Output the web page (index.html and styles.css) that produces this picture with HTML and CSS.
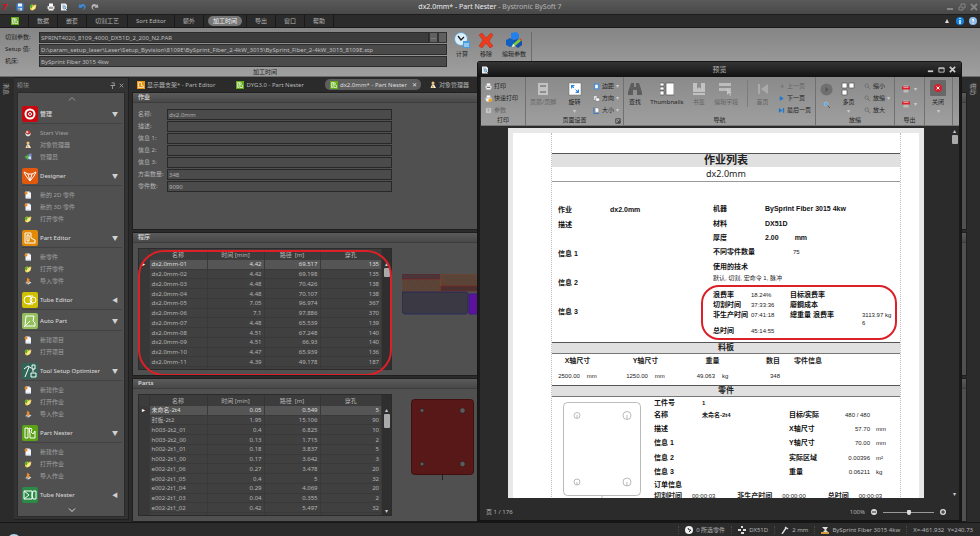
FILE: index.html
```html
<!DOCTYPE html>
<html lang="zh-CN">
<head>
    <meta charset="UTF-8">
    <meta name="viewport" content="width=device-width, initial-scale=1.0">
    <title>dx2.0mm* - Part Nester - Bystronic BySoft 7</title>
    <link rel="stylesheet" href="styles.css">
</head>
<body>
    <svg class="sprite" aria-hidden="true">
        <symbol id="new" viewBox="0 0 16 16"><path d="M3 1h8l3 3v11H3z" fill="#f4f6fa"/><path d="M11 1v3h3z" fill="#9db4d8"/><circle cx="4" cy="4" r="3" fill="#f08a24"/><path d="M5 13h8v2H5z" fill="#c5d3ea"/></symbol>
        <symbol id="open" viewBox="0 0 16 16"><path d="M2 5l5-2 2 2 4-3v9l-6 4-5-2z" fill="#e8c63a"/><path d="M5 8l10-4-3 8-7 3z" fill="#fbe98a"/><path d="M1 7l4-5 2 5-2 4z" fill="#4fae2c"/></symbol>
        <symbol id="import" viewBox="0 0 16 16"><path d="M3 10l6-2 6 3-6 4z" fill="#cfd3d8"/><path d="M3 11v2l6 3v-2z" fill="#8d9298"/><path d="M5 7l2-6 5 5-2 1 1 4-4 1-1-5z" fill="#f08a24"/></symbol>
        <symbol id="start" viewBox="0 0 16 16"><path d="M2 8l6 3 6-3-2 5-4 2-4-2z" fill="#e6e6e6"/><path d="M2 7l6-5 6 5-6 4z" fill="#d6352b"/><path d="M6 3l3 5-5-1z" fill="#fff"/></symbol>
        <symbol id="user" viewBox="0 0 16 16"><circle cx="8" cy="4" r="3" fill="#f1c27a"/><path d="M3 14l3-7h4l4 7z" fill="#f5f1e6"/><path d="M7 8l3 5H5z" fill="#d89128"/></symbol>
        <symbol id="admin" viewBox="0 0 16 16"><path d="M9 2l6-1v13l-6-1z" fill="#7e8fd0"/><path d="M1 8l7-5v3h3v4H8v4z" fill="#53b148"/><path d="M9 7h5v5H9z" fill="#d8dff5"/></symbol>
        <symbol id="save" viewBox="0 0 16 16"><path d="M1 1h14v14H1z" fill="#3f84d6"/><path d="M4 1h8v6H4z" fill="#eef5fd"/><path d="M4 10h8v5H4z" fill="#c8d6e6"/><path d="M5 11h2v4H5z" fill="#345"/></symbol>
        <symbol id="print" viewBox="0 0 16 16"><path d="M4 1h8v5H4z" fill="#fff"/><path d="M1 6h14v6H1z" fill="#dadada"/><path d="M3 9h10v6H3z" fill="#f5f5f5"/><path d="M4 9h8v2H4z" fill="#555"/></symbol>
        <symbol id="preview" viewBox="0 0 16 16"><path d="M2 1h9l3 3v11H2z" fill="#eef2f6"/><path d="M4 4h5M4 6h6" stroke="#8aa" /><circle cx="9" cy="9" r="3" fill="#9fd0f0" stroke="#47708c"/><path d="M11 11l3 3" stroke="#47708c" stroke-width="2"/></symbol>
        <symbol id="undo" viewBox="0 0 16 16"><path d="M1 9l2-7 2 2c5-4 11-1 10 5-1 3-3 5-6 5 3-2 4-4 3-6-1-2-3-2-5 0l2 2z" fill="#3d8be0"/></symbol>
        <symbol id="redo" viewBox="0 0 16 16"><path d="M15 9l-2-7-2 2C6 0 0 3 1 9c1 3 3 5 6 5-3-2-4-4-3-6 1-2 3-2 5 0l-2 2z" fill="#b4b4b4"/></symbol>
        <symbol id="nester" viewBox="0 0 16 16"><path d="M0 0h16v16H0z" fill="#63ad18"/><path d="M3 3h3v10H3zM7 3l4 1-2 3 4 2v4H8V9z" fill="none" stroke="#fff" stroke-width="1.3"/></symbol>
        <symbol id="editor" viewBox="0 0 16 16"><path d="M0 0h16v16H0z" fill="#ea9711"/><path d="M3 3h6v6l4 1v3H3z" fill="none" stroke="#fff" stroke-width="1.3"/></symbol>
        <symbol id="lens" viewBox="0 0 16 16"><circle cx="6" cy="6" r="4" fill="none" stroke="#666" stroke-width="1.5"/><path d="M9 9l5 5" stroke="#666" stroke-width="2"/></symbol>
        <symbol id="pdf" viewBox="0 0 16 16"><path d="M3 1h10v14H3z" fill="#bbb"/><path d="M0 3h16v6H0z" fill="#d8222b"/><path d="M3 5h10v1H3z" fill="#fff"/></symbol>
    </svg>

    <div class="app">
        <header class="titlebar">
            <div class="quick">
                <b class="seven">7</b>
                <button aria-label="保存"><svg><use href="#save"/></svg></button>
                <button aria-label="打开"><svg><use href="#open"/></svg></button>
                <i></i>
                <button aria-label="打印"><svg><use href="#print"/></svg></button>
                <button aria-label="预览"><svg><use href="#preview"/></svg></button>
                <i></i>
                <button aria-label="撤消"><svg><use href="#undo"/></svg></button>
                <button aria-label="重做"><svg><use href="#redo"/></svg></button>
            </div>
            <h1>dx2.0mm* - Part Nester <span>- Bystronic BySoft 7</span></h1>
            <div class="winbtns">
                <button aria-label="最小化"><svg viewBox="0 0 8 8"><path d="M1 6h6" stroke-width="2"/></svg></button>
                <button aria-label="还原"><svg viewBox="0 0 8 8"><path d="M1 4h4v3H1zM3 3V1h4v4H6"/></svg></button>
                <button aria-label="退出"><svg viewBox="0 0 8 8"><path d="M1 1l6 6M7 1L1 7" stroke-width="2"/></svg></button>
            </div>
        </header>

        <nav class="menu">
            <button class="logo" aria-label="Part Nester"><svg><use href="#nester"/></svg></button>
            <button>数据</button>
            <button>嵌套</button>
            <button>切割工艺</button>
            <button>Sort Editor</button>
            <button>额外</button>
            <button class="active"><span>加工时间</span></button>
            <button>导出</button>
            <button>窗口</button>
            <button>帮助</button>
            <div class="menu-right">
                <svg viewBox="0 0 8 8"><path d="M4 2l2 4H2z" fill="#ddd"/></svg>
                <svg viewBox="0 0 8 8"><circle cx="4" cy="4" r="4" fill="#1583e0"/><path d="M4 1v1M4 3v4" stroke="#fff" stroke-width="1.4"/></svg>
                <svg viewBox="0 0 8 8"><circle cx="4" cy="4" r="4" fill="#8fbce8"/><path d="M3 3q1-2 2 0L4 4v1M4 6v1" stroke="#fff" fill="none"/></svg>
            </div>
        </nav>

        <section class="ribbon">
            <div class="ribbon-group">
                <div class="params">
                    <label for="par">切割参数:</label>
                    <div class="field"><input id="par" readonly value="SPRINT4020_8109_4000_DX51D_2_200_N2.PAR"><button aria-label="浏览">···</button><button aria-label="清除"></button></div>
                    <label for="setup">Setup 值:</label>
                    <input id="setup" readonly value="D:\param_setup_laser\Laser\Setup_Byvision\8109E\BySprint_Fiber_2-4kW_3015\BySprint_Fiber_2-4kW_3015_8109E.stp">
                    <label for="machine">机床:</label>
                    <input id="machine" readonly value="BySprint Fiber 3015 4kw">
                </div>
                <div class="ribbon-actions">
                    <button><svg viewBox="0 0 16 16"><circle cx="7" cy="7" r="6.5" fill="#d9f0fa" stroke="#6c9ec4"/><path d="M4 4l3 4 3-3" fill="none" stroke="#222" stroke-width="1.3"/><path d="M9 9h7v7H9z" fill="#4a9bdc"/><path d="M10 12h5M10 14h5" stroke="#d8f0ff"/></svg>计算</button>
                    <button><svg viewBox="0 0 16 16"><path d="M1 3l3-2 4 5 5-5 2 2-4 6 4 5-3 2-4-5-4 5-3-2 4-6z" fill="#ee3b1c" stroke="#b8260f" stroke-width=".5"/></svg>移除</button>
                    <button><svg viewBox="0 0 16 16"><path d="M5 1l5-1 3 2v5l-5 1-3-2z" fill="#2380ea"/><path d="M0 8l4-2 4 2v5l-4 2-4-2z" fill="#125fc4"/><path d="M8 8l4-1 4 2v4l-4 3-4-3z" fill="#174fa6"/><path d="M6 15l1-3 7-6 2 2-7 6z" fill="#7ccb3a"/><path d="M6 15l1-3 2 2z" fill="#fff"/><path d="M13 7l1-1 2 2-1 1z" fill="#e33"/></svg>编辑参数</button>
                </div>
            </div>
            <div class="ribbon-caption">加工时间</div>
        </section>

        <main class="workspace">
            <aside class="strip"><span>消息</span></aside>

            <aside class="modules">
                <header><h2>模块</h2>
                    <svg viewBox="0 0 8 8"><path d="M3 1h3v3H2h5M4 4v4" /></svg>
                    <svg viewBox="0 0 8 8"><path d="M2 2l4 4M6 2L2 6"/></svg>
                </header>
                <div class="module-box">
                    <svg class="chev dim" viewBox="0 0 8 8"><path d="M1 5l3-3 3 3"/></svg>
                    <div class="module-list">
                        <h3><svg class="red" viewBox="0 0 16 16"><circle cx="8" cy="8" r="4.5" stroke-width="2"/><circle cx="8" cy="8" r="1.5"/></svg>管理<span>▼</span></h3>
                        <ul>
                            <li><a href="#"><svg><use href="#start"/></svg>Start View</a></li>
                            <li><a href="#"><svg><use href="#user"/></svg>对象管理器</a></li>
                            <li><a href="#"><svg><use href="#admin"/></svg>管理员</a></li>
                        </ul>
                        <h3><svg class="orange" viewBox="0 0 16 16"><path d="M2 4l4 2h4l4-2-2 4-4 5-4-5zM6 6l2 7 2-7"/></svg>Designer<span>▼</span></h3>
                        <ul>
                            <li><a href="#"><svg><use href="#new"/></svg>新的 2D 零件</a></li>
                            <li><a href="#"><svg><use href="#new"/></svg>新的 3D 零件</a></li>
                            <li><a href="#"><svg><use href="#open"/></svg>打开零件</a></li>
                        </ul>
                        <h3><svg class="amber" viewBox="0 0 16 16"><path d="M3 3h6v5l4 2v3H3zM5 5h2v6H5z"/></svg>Part Editor<span>▼</span></h3>
                        <ul>
                            <li><a href="#"><svg><use href="#new"/></svg>新零件</a></li>
                            <li><a href="#"><svg><use href="#open"/></svg>打开零件</a></li>
                            <li><a href="#"><svg><use href="#import"/></svg>导入零件</a></li>
                        </ul>
                        <h3><svg class="yellow" viewBox="0 0 16 16"><circle cx="6" cy="8" r="4"/><circle cx="11" cy="8" r="3"/><path d="M6 4h5M6 12h5"/></svg>Tube Editor<span>◀</span></h3>
                        <h3><svg class="lime" viewBox="0 0 16 16"><path d="M4 3h8l-1 5 2 2v3H3zM2 14l6-6"/></svg>Auto Part<span>▼</span></h3>
                        <ul>
                            <li><a href="#"><svg><use href="#new"/></svg>新建项目</a></li>
                            <li><a href="#"><svg><use href="#open"/></svg>打开项目</a></li>
                        </ul>
                        <h3><svg class="teal" viewBox="0 0 16 16"><path d="M3 14L7 4M2 6l4-3 3 2M10 2h3v4h-3zM11 6v3M9 10h5v4H9z"/></svg>Tool Setup Optimizer<span>▼</span></h3>
                        <ul>
                            <li><a href="#"><svg><use href="#new"/></svg>新建作业</a></li>
                            <li><a href="#"><svg><use href="#open"/></svg>打开作业</a></li>
                            <li><a href="#"><svg><use href="#import"/></svg>导入作业</a></li>
                        </ul>
                        <h3><svg class="green" viewBox="0 0 16 16"><path d="M3 3h3v10H3zM7 3l3 1-1 3 2 2 2-3v7H8V9z"/></svg>Part Nester<span>▼</span></h3>
                        <ul>
                            <li><a href="#"><svg><use href="#new"/></svg>新建作业</a></li>
                            <li><a href="#"><svg><use href="#open"/></svg>打开作业</a></li>
                            <li><a href="#"><svg><use href="#import"/></svg>导入作业</a></li>
                        </ul>
                        <h3><svg class="forest" viewBox="0 0 16 16"><path d="M2 4h8v8H2zM2 4l5 4-5 4M11 4h3v8h-3q-2-4 0-8"/></svg>Tube Nester<span>◀</span></h3>
                        <div class="next-module cyan"></div>
                    </div>
                    <svg class="chev" viewBox="0 0 8 8"><path d="M1 3l3 3 3-3"/></svg>
                </div>
            </aside>

            <div class="documents">
                <nav class="doc-tabs">
                    <button><svg><use href="#editor"/></svg>显示器支架* - Part Editor</button>
                    <button><svg><use href="#nester"/></svg>DYG3.0 - Part Nester</button>
                    <button class="active"><svg><use href="#nester"/></svg>dx2.0mm* - Part Nester<em>✕</em></button>
                    <button><svg><use href="#user"/></svg>对象管理器</button>
                </nav>

                <section class="panel">
                    <h2>作业</h2>
                    <form class="job">
                        <label for="name">名称:</label><input id="name" value="dx2.0mm">
                        <label for="desc">描述:</label><input id="desc">
                        <label for="info1">信息 1:</label><input id="info1">
                        <label for="info2">信息 2:</label><input id="info2">
                        <label for="info3">信息 3:</label><input id="info3">
                        <label for="plans">方案数量:</label><input id="plans" value="348">
                        <label for="parts">零件数:</label><input id="parts" value="9090">
                    </form>
                </section>

                <section class="panel">
                    <h2>程序</h2>
                    <div class="panel-body">
                        <div class="grid-box">
                            <table>
                                <thead><tr><th></th><th>名称</th><th>时间 [min]</th><th>路径&nbsp; [m]</th><th>穿孔</th></tr></thead>
                                <tbody>
                                    <tr class="current"><td>▸</td><td>dx2.0mm-01</td><td>4.42</td><td>69.517</td><td>135</td></tr>
                                    <tr><td></td><td>dx2.0mm-02</td><td>4.42</td><td>69.198</td><td>135</td></tr>
                                    <tr><td></td><td>dx2.0mm-03</td><td>4.48</td><td>70.426</td><td>138</td></tr>
                                    <tr><td></td><td>dx2.0mm-04</td><td>4.48</td><td>70.107</td><td>138</td></tr>
                                    <tr><td></td><td>dx2.0mm-05</td><td>7.05</td><td>96.974</td><td>367</td></tr>
                                    <tr><td></td><td>dx2.0mm-06</td><td>7.1</td><td>97.886</td><td>370</td></tr>
                                    <tr><td></td><td>dx2.0mm-07</td><td>4.48</td><td>65.539</td><td>139</td></tr>
                                    <tr><td></td><td>dx2.0mm-08</td><td>4.51</td><td>67.248</td><td>140</td></tr>
                                    <tr><td></td><td>dx2.0mm-09</td><td>4.51</td><td>66.93</td><td>140</td></tr>
                                    <tr><td></td><td>dx2.0mm-10</td><td>4.47</td><td>65.939</td><td>136</td></tr>
                                    <tr><td></td><td>dx2.0mm-11</td><td>4.39</td><td>49.178</td><td>187</td></tr>
                                    <tr><td></td><td>dx2.0mm-12</td><td>4.39</td><td>49.178</td><td>187</td></tr>
                                </tbody>
                            </table>
                            <div class="scroll"><i>▴</i><b class="short"></b></div>
                            <div class="mark mark-programs"></div>
                        </div>
                        <svg class="nest" viewBox="0 0 120 41">
                            <path d="M0 5h39v16H0z" fill="#5a4437" stroke="#8a4527" stroke-width=".6"/>
                            <path d="M0 0h38v5H0z" fill="#4a3539" stroke="#6b2230" stroke-width=".8"/>
                            <path d="M39 0h80v12H39z" fill="#5a4437" stroke="#8a4527" stroke-width=".6"/>
                            <path d="M39 12h80v5H39z" fill="#4b3030" stroke="#7a2626" stroke-width=".8"/>
                            <path d="M4 8h34M8 12h28M42 4h40M44 8h40" stroke="#8a4527" stroke-width=".7" stroke-dasharray="1 7"/>
                            <path d="M0 18h65l1 2v18l-2 2H2l-2-2z" fill="#3a3944" stroke="#25235e" stroke-width=".8"/>
                            <path d="M67 20h50v20H67z" fill="#5b139e" stroke="#3c1a80"/>
                        </svg>
                    </div>
                </section>

                <section class="panel">
                    <h2>Parts</h2>
                    <div class="panel-body">
                        <div class="grid-box">
                            <table>
                                <thead><tr><th></th><th>名称</th><th>时间 [min]</th><th>路径&nbsp; [m]</th><th>穿孔</th></tr></thead>
                                <tbody>
                                    <tr class="current"><td>▸</td><td>未命名-2t4</td><td>0.05</td><td>0.549</td><td>5</td></tr>
                                    <tr><td></td><td>封板-2t2</td><td>1.95</td><td>15.106</td><td>90</td></tr>
                                    <tr><td></td><td>h003-2t2_01</td><td>0.4</td><td>6.825</td><td>10</td></tr>
                                    <tr><td></td><td>h003-2t2_00</td><td>0.13</td><td>1.715</td><td>2</td></tr>
                                    <tr><td></td><td>h002-2t1_01</td><td>0.18</td><td>3.837</td><td>5</td></tr>
                                    <tr><td></td><td>h002-2t1_00</td><td>0.17</td><td>3.642</td><td>3</td></tr>
                                    <tr><td></td><td>e002-2t1_06</td><td>0.27</td><td>3.478</td><td>20</td></tr>
                                    <tr><td></td><td>e002-2t1_05</td><td>0.4</td><td>5</td><td>32</td></tr>
                                    <tr><td></td><td>e002-2t1_04</td><td>0.29</td><td>4.069</td><td>20</td></tr>
                                    <tr><td></td><td>e002-2t1_03</td><td>0.04</td><td>0.355</td><td>2</td></tr>
                                    <tr><td></td><td>e002-2t1_02</td><td>0.42</td><td>5.497</td><td>32</td></tr>
                                    <tr><td></td><td>&nbsp;</td><td></td><td></td><td></td></tr>
                                </tbody>
                            </table>
                            <div class="scroll"><i>▴</i><b></b><i class="down">▾</i></div>
                        </div>
                        <svg class="part" viewBox="0 0 63 82">
                            <rect x=".5" y=".5" width="62" height="75" rx="3" fill="#571817" stroke="#40100f"/>
                            <g fill="#5c5c5c" stroke="#2c1a1a" stroke-width=".7"><circle cx="11" cy="11.500" r="2"/><circle cx="51.500" cy="11.500" r="2.700"/><circle cx="11" cy="65" r="2"/><circle cx="51.500" cy="65" r="2.700"/></g>
                            <path d="M31.500 76v5" stroke="#222"/>
                        </svg>
                    </div>
                </section>
            </div>

            <aside class="strip strip-right"><span>帮助</span></aside>
        </main>

        <footer class="status">
            <svg class="orb" viewBox="0 0 14 14"><circle cx="7" cy="7" r="7" fill="#b8d4e6"/></svg>
            <span><svg viewBox="0 0 8 8"><circle cx="4" cy="4" r="4" fill="#eee"/><path d="M3 2l1 2h2L4 6" stroke="#333" fill="none"/></svg>0 所选零件</span>
            <span><svg viewBox="0 0 8 8"><path d="M3 0h2v2H3zM0 3h3v2H0zM5 3h3v2H5zM3 6h3v2H3z" fill="#ddd"/></svg>DX51D</span>
            <span><svg viewBox="0 0 8 8"><path d="M1 8l4-6M4 1l3 2" stroke="#ddd" stroke-width="1.4"/></svg>2 mm</span>
            <span><svg viewBox="0 0 8 8"><path d="M1 1h6L5 4l2 2H2l2-2z" fill="#ddd"/><path d="M0 6h8v2H0z" fill="#d89b3a"/></svg>BySprint Fiber 3015 4kw</span>
            <span>X=-461.932&nbsp; Y=240.73</span>
        </footer>

        <section class="preview">
            <header class="preview-title">
                <svg><use href="#preview"/></svg>
                <h2>预览</h2>
                <div class="winbtns">
                    <button aria-label="最小化"><svg viewBox="0 0 8 8"><path d="M1 6h6" stroke-width="2"/></svg></button>
                    <button aria-label="最大化"><svg viewBox="0 0 8 8"><path d="M1 2h6v5H1zM1 3h6"/></svg></button>
                    <button aria-label="关闭预览"><svg viewBox="0 0 8 8"><path d="M1 1l6 6M7 1L1 7" stroke-width="2"/></svg></button>
                </div>
            </header>

            <div class="tools">
                <div class="tool-group">
                    <div class="tool-row">
                        <div class="tool-list">
                            <button><svg><use href="#print"/></svg>打印</button>
                            <button><svg viewBox="0 0 16 16"><path d="M4 1h8v5H4z" fill="#fff"/><path d="M1 6h14v6H1z" fill="#dadada"/><path d="M3 9h6v6H3z" fill="#f5f5f5"/><circle cx="12" cy="12" r="4" fill="#f2a71b"/></svg>快速打印</button>
                            <button disabled><svg viewBox="0 0 16 16"><path d="M2 2h12v12H2z" fill="#c4c4c4"/><path d="M5 5h6M8 5v6" stroke="#888"/></svg>参数</button>
                        </div>
                    </div>
                    <footer>打印</footer>
                </div>
                <div class="tool-group">
                    <div class="tool-row">
                        <button class="big" disabled><svg viewBox="0 0 14 14"><path d="M2 1h10v12H2z" fill="#c2c2c2"/><path d="M4 4h6M4 10h6" stroke="#8d8d8d" stroke-width="2"/></svg>页眉/页脚</button>
                        <button class="big"><svg viewBox="0 0 14 14"><path d="M1 1h12v12H1z" fill="#fff" stroke="#666" stroke-width=".5"/><path d="M4 4l6 6" stroke="#2a87dd" stroke-dasharray="3 2"/><path d="M3 3h4L3 7zM11 11H7l4-4z" fill="#2a87dd"/></svg>旋转<small>▾</small></button>
                        <div class="tool-list">
                            <button><svg viewBox="0 0 16 16"><path d="M2 1h12v14H2z" fill="#4a90d9"/><path d="M5 4h6v8H5z" fill="#fff"/></svg>边距<small>▾</small></button>
                            <button><svg viewBox="0 0 16 16"><path d="M1 1h7l2 3v8H1z" fill="#ddd" stroke="#666"/><path d="M6 7h9v7H6z" fill="#fff" stroke="#666"/></svg>方向<small>▾</small></button>
                            <button><svg viewBox="0 0 16 16"><path d="M2 1v14h12" stroke="#2a77cd" stroke-width="2" fill="none"/><path d="M5 2h6l2 3v7H5z" fill="#fff" stroke="#777"/></svg>大小<small>▾</small></button>
                        </div>
                    </div>
                    <footer>页面设置<svg viewBox="0 0 8 8"><path d="M1 1h6v6H1zM3 3l3 3M6 3v3H3" fill="none" stroke="#333"/></svg></footer>
                </div>
                <div class="tool-group">
                    <div class="tool-row">
                        <button class="big"><svg viewBox="0 0 14 14"><path d="M3 1h3v4h2V1h3l3 9v3H9V8H5v5H0v-3z" fill="#5e5e5e"/></svg>查找</button>
                        <button class="big"><svg viewBox="0 0 14 14"><path d="M0 1h4v3H0zM0 5h4v3H0zM0 9h4v4H0zM6 1h8v12H6z" fill="#fff" stroke="#555" stroke-width=".7"/></svg>Thumbnails</button>
                        <button class="big" disabled><svg viewBox="0 0 14 14"><path d="M1 1h12v9H1zM1 11h12v2H1z" fill="#c2c2c2"/><path d="M5 1h4v6L7 5 5 7z" fill="#8d8d8d"/></svg>书签</button>
                        <button class="big" disabled><svg viewBox="0 0 14 14"><path d="M0 1h12v3H0zM0 6h12v3H0z" fill="#bcbcbc"/><path d="M8 6v7l2-2 1 3 1-1-1-2h2z" fill="#c6c6c6"/></svg>编辑字段</button>
                        <button class="big split" disabled><svg viewBox="0 0 14 14"><path d="M2 2h2v10H2zM12 2v10L5 7z" fill="#aaa"/></svg>首页</button>
                        <div class="tool-list">
                            <button disabled><svg viewBox="0 0 16 16"><path d="M12 3v9L5 8z" fill="#777"/></svg>上一页</button>
                            <button><svg viewBox="0 0 16 16"><path d="M4 2v11l9-5z" fill="#1679d2"/></svg>下一页</button>
                            <button><svg viewBox="0 0 16 16"><path d="M2 2v11l8-5zM11 2h3v11h-3z" fill="#1679d2"/></svg>最后一页</button>
                        </div>
                    </div>
                    <footer>导航</footer>
                </div>
                <div class="tool-group">
                    <div class="tool-row">
                        <div class="tool-pair">
                            <button disabled aria-label="指针"><svg class="round" viewBox="0 0 14 14"><circle cx="7" cy="7" r="6.500" fill="#707070"/><path d="M6 4v6l3-3z" fill="#555"/></svg></button>
                            <button aria-label="放大镜"><svg viewBox="0 0 16 16"><circle cx="6" cy="6" r="4" fill="#5aa9ee" stroke="#ccc"/><path d="M9 9l5 5" stroke="#555" stroke-width="2"/></svg></button>
                        </div>
                        <button class="big"><svg viewBox="0 0 14 14"><path d="M1 1h5v5H1zM8 1h5v5H8zM1 8h5v5H1z" fill="#fff" stroke="#555" stroke-width=".7"/></svg>多页<small>▾</small></button>
                        <div class="tool-list">
                            <button><svg><use href="#lens"/></svg>缩小</button>
                            <button><svg><use href="#lens"/></svg>放缩<small>▾</small></button>
                            <button><svg><use href="#lens"/></svg>放大</button>
                        </div>
                    </div>
                    <footer>放缩</footer>
                </div>
                <div class="tool-group">
                    <div class="tool-pair">
                        <button aria-label="导出 PDF"><svg><use href="#pdf"/></svg><small>▾</small></button>
                        <button aria-label="发送 PDF"><svg><use href="#pdf"/></svg><small>▾</small></button>
                    </div>
                    <footer>导出</footer>
                </div>
                <div class="tool-group">
                    <div class="tool-row">
                        <button class="big close"><svg viewBox="0 0 16 16"><rect width="16" height="16" rx="1" fill="#686868"/><circle cx="8" cy="8" r="4" fill="#d5202b"/><path d="M6.500 6.500l3 3M9.500 6.500l-3 3" stroke="#fff"/></svg>关闭<small>▾</small></button>
                    </div>
                </div>
                <div class="tool-group"></div>
            </div>

            <div class="canvas">
                <div class="paper">
                    <article class="report">
                        <h2>作业列表</h2>
                        <p class="job-name">dx2.0mm</p>
                        <div class="summary">
                            <dl class="summary-left">
                                <dt>作业</dt><dd>dx2.0mm</dd>
                                <dt>描述</dt><dd></dd>
                                <dt class="gap">信息 1</dt><dd></dd>
                                <dt class="gap">信息 2</dt><dd></dd>
                                <dt class="gap">信息 3</dt><dd></dd>
                            </dl>
                            <div class="summary-right">
                                <dl class="machine">
                                    <dt>机器</dt><dd>BySprint Fiber 3015 4kw</dd>
                                    <dt>材料</dt><dd>DX51D</dd>
                                    <dt>厚度</dt><dd>2.00<span>mm</span></dd>
                                    <dt>不同零件数量</dt><dd class="count">75</dd>
                                    <dt>使用的技术</dt><dd></dd>
                                </dl>
                                <p>默认, 切割, 宏命令 1, 脉冲</p>
                                <dl class="totals">
                                    <dt>浪费率</dt><dd>18.24%</dd><dt>目标浪费率</dt><dd></dd>
                                    <dt>切割时间</dt><dd>37:33:36</dd><dt>廢鋼成本</dt><dd></dd>
                                    <dt>非生产时间</dt><dd>07:41:18</dd><dt>總重量 浪费率</dt><dd>3113.97 kg<br>6</dd>
                                    <dt>总时间</dt><dd>45:14:55</dd><dt></dt><dd></dd>
                                    <div class="mark mark-totals"></div>
                                </dl>
                            </div>
                        </div>

                        <h3>料板</h3>
                        <table class="sheets">
                            <thead><tr><th>X轴尺寸</th><th>Y轴尺寸</th><th>重量</th><th>数目</th><th>零件信息</th></tr></thead>
                            <tbody><tr><td>2500.00<span>mm</span></td><td>1250.00<span>mm</span></td><td>49.063<span>kg</span></td><td>348</td><td></td></tr></tbody>
                        </table>

                        <h3>零件</h3>
                        <div class="item">
                            <svg viewBox="0 0 102 101" fill="none" stroke="#aaa" stroke-width=".8">
                                <rect x="11.500" y="5.500" width="77" height="93" rx="4"/>
                                <circle cx="25" cy="18.500" r="3"/><circle cx="75" cy="18.500" r="4"/>
                                <circle cx="25" cy="85" r="3"/><circle cx="75" cy="85" r="4"/>
                                <path d="M25 18v3M75 18v4M25 85v3M75 85v4M50 99v2"/>
                            </svg>
                            <div class="item-info">
                                <dl>
                                    <dt>工件号</dt><dd>1</dd><dt></dt><dd></dd><dd></dd>
                                    <dt>名称</dt><dd>未命名-2t4</dd><dt>目标/实际</dt><dd>480 / 480</dd><dd></dd>
                                    <dt>描述</dt><dd></dd><dt>X轴尺寸</dt><dd>57.70</dd><dd>mm</dd>
                                    <dt>信息 1</dt><dd></dd><dt>Y轴尺寸</dt><dd>70.00</dd><dd>mm</dd>
                                    <dt>信息 2</dt><dd></dd><dt>实际区域</dt><dd>0.00396</dd><dd>m²</dd>
                                    <dt>信息 3</dt><dd></dd><dt>重量</dt><dd>0.06211</dd><dd>kg</dd>
                                    <dt>订单信息</dt>
                                </dl>
                                <p><b>切割时间</b><span>00:00:03</span><b>非生产时间</b><span>00:00:00</span><b>总时间</b><span>00:00:03</span></p>
                            </div>
                        </div>
                    </article>
                </div>
                <div class="scroll"><i>▴</i><b></b><i class="down">▾</i></div>
            </div>

            <footer class="preview-status">
                <span>页 1 / 176</span>
                <label for="zoom">100%</label>
                <svg viewBox="0 0 8 8"><circle cx="4" cy="4" r="3" fill="#ddd"/><path d="M2 4h4" stroke="#222"/></svg>
                <input type="range" id="zoom" min="0" max="200" value="100">
                <svg viewBox="0 0 8 8"><circle cx="4" cy="4" r="3" fill="#ddd"/><path d="M2 4h4M4 2v4" stroke="#222"/></svg>
            </footer>
        </section>
    </div>
</body>
</html>
```
FILE: styles.css
```css
* { box-sizing: border-box; }
html, body {
    height: 100%;
    margin: 0;
    padding: 0;
}
body {
    background: #2b2b2b;
    color: #b4b4b4;
    font-family: "Noto Sans", "Noto Sans CJK SC", sans-serif;
    font-size: 6px;
    line-height: 10px;
    overflow: hidden;
}
h1, h2, h3, p, ul, dl, dt, dd { margin: 0; padding: 0; font-size: inherit; }
ul { list-style: none; }
a { color: inherit; text-decoration: none; }
button, input {
    margin: 0;
    padding: 0;
    border: none;
    background: none;
    color: inherit;
    font: inherit;
}
button { display: flex; align-items: center; white-space: nowrap; }
svg { display: block; flex: none; width: 8px; height: 8px; }
small { font-size: 6px; line-height: 6px; color: #ccc; }
.sprite { position: absolute; width: 0; height: 0; }

.app {
    position: relative;
    display: flex;
    flex-direction: column;
    height: 100vh;
}

/* title bar */
.titlebar {
    display: grid;
    grid-template-columns: 1fr auto 1fr;
    align-items: center;
    height: 15px;
    background: linear-gradient(#5a5a5a, #484848);
    border-bottom: 1px solid #1d1d1d;
}
.titlebar h1 { font-size: 7px; font-weight: normal; color: #eee; }
.titlebar h1 span { color: #b5b5b5; }
.quick { display: flex; align-items: center; gap: 5px; padding-left: 2px; }
.quick i { width: 0; }
.seven { width: 9px; color: #d81414; font-size: 9px; font-style: italic; }
.winbtns { display: flex; justify-content: flex-end; gap: 4px; padding-right: 2px; }
.winbtns svg { fill: none; stroke: #858585; }

/* menu */
.menu {
    display: flex;
    height: 13px;
    background: #2b2b2b;
    border-bottom: 1px solid #1a1a1a;
}
.menu button {
    padding: 0 8px;
    border-right: 1px solid #191919;
}
.menu button.active { padding: 0 4px; }
.menu .active span {
    padding: 0 5px;
    border-radius: 5px;
    background: #777;
    color: #f0f0f0;
}
.menu .logo { padding: 0 9px 0 11px; }
.menu-right { display: flex; align-items: center; gap: 5px; margin-left: auto; padding-right: 3px; }

/* ribbon */
.ribbon {
    height: 49px;
    padding: 4px 0 0 5px;
    background: linear-gradient(#858585, #9f9f9f);
    border-bottom: 1px solid #6d6d6d;
    color: #222;
}
.ribbon-group { display: flex; gap: 7px; height: 36px; }
.params {
    display: grid;
    grid-template-columns: 34px 408px;
    grid-auto-rows: 11px;
    row-gap: 1px;
    width: 442px;
}
.params input {
    width: 100%;
    height: 11px;
    padding: 0 1px;
    background: #4a4a4a;
    border: 1px solid #2c2c2c;
    color: #bdbdbd;
}
.field { display: flex; }
.params .field input { background: #3c3c3c; }
.field button {
    justify-content: center;
    width: 9px;
    flex: none;
    background: #606060;
    border: 1px solid #333;
    color: #ddd;
}
.ribbon-actions {
    display: flex;
    gap: 8px;
    height: 44px;
    padding-right: 5px;
    border-right: 1px solid #6c6c6c;
}
.ribbon-actions button { flex-direction: column; gap: 1px; min-width: 14px; }
.ribbon-actions svg { width: 16px; height: 16px; }
.ribbon-caption { width: 520px; line-height: 9px; text-align: center; }

/* workspace */
.workspace { display: flex; flex: 1; min-height: 0; }
.strip { width: 14px; padding: 6px 0 0 1px; }
.strip span {
    writing-mode: vertical-rl;
    text-orientation: sideways;
}
.strip-right { width: 13px; }
.modules {
    display: flex;
    flex-direction: column;
    width: 115px;
    margin-bottom: 2px;
    padding: 0 3px 2px;
    background: #333;
    border: 1px solid #202020;
    border-width: 1px 1px 1px 0;
}
.modules header { display: flex; align-items: center; gap: 2px; height: 14px; }
.modules h2 { flex: 1; font-weight: normal; color: #8e8e8e; }
.modules header svg { fill: none; stroke: #a0a0a0; width: 7px; height: 7px; }
.module-box {
    display: flex;
    flex-direction: column;
    flex: 1;
    min-height: 0;
    padding: 0 2px 0 4px;
    background: #505050;
    border: 1px solid #2a2a2a;
}
.chev { align-self: center; height: 13px; fill: none; stroke: #ddd; stroke-width: 1; }
.chev.dim { stroke: #999; }
.module-list { flex: 1; min-height: 0; overflow: hidden; }
.modules h3 {
    display: flex;
    align-items: center;
    height: 18px;
    margin-bottom: 3px;
    padding-bottom: 1px;
    border-bottom: 1px solid #424242;
    font-weight: 500;
    color: #d2d2d2;
}
.modules h3 svg {
    width: 16px;
    height: 16px;
    margin-right: 2px;
    border-radius: 2px;
    fill: none;
    stroke: #fff;
    stroke-width: 1;
}
.modules h3 span { margin-left: auto; padding-right: 4px; font-size: 6px; }
.modules ul { padding-bottom: 5px; }
.modules li a { display: flex; align-items: center; gap: 8px; height: 12px; padding-left: 2px; color: #a0a0a0; }
.next-module { width: 16px; height: 16px; border-radius: 2px; }
.red { background: #c8080e; }
.orange { background: #e2580c; }
.amber { background: #e08a07; }
.yellow { background: #cfc100; }
.lime { background: #93bf5c; }
.teal { background: #2f6658; }
.green { background: #5ba315; }
.forest { background: #2b8a45; }
.cyan { background: #1692b4; }

/* documents */
.documents {
    display: flex;
    flex-direction: column;
    flex: 1;
    min-width: 0;
    padding-left: 3px;
}
.doc-tabs { display: flex; gap: 8px; height: 15px; padding: 2px 5px; }
.doc-tabs button { gap: 2px; height: 11px; }
.doc-tabs button:nth-child(1), .doc-tabs button:nth-child(2) { padding-right: 13px; }
.doc-tabs button.active {
    padding: 0 4px 0 5px;
    border-radius: 5px;
    background: #5e5e5e;
    color: #ddd;
}
.doc-tabs em { margin-left: 3px; font-style: normal; }
.panel {
    flex: none;
    height: 144px;
    margin-bottom: 2px;
    background: #505050;
    border: 1px solid #1f1f1f;
    overflow: hidden;
}
.panel:nth-of-type(1) { height: 138px; }
.panel h2 {
    height: 10px;
    padding-left: 5px;
    background: linear-gradient(#5b5b5b, #484848);
    border-bottom: 1px solid #3d3d3d;
    line-height: 9px;
    color: #c8c8c8;
}
.job {
    display: grid;
    grid-template-columns: 29px 225px;
    row-gap: 1px;
    padding: 6px 5px;
}
.job label { line-height: 11px; white-space: nowrap; }
.job input {
    height: 11px;
    padding: 0 1px;
    background: #4b4b4b;
    border: 1px solid #282828;
    color: #b0b0b0;
}
.panel-body { display: flex; padding: 5px; }
.grid-box {
    position: relative;
    display: flex;
    width: 254px;
    height: 122px;
    background: #404040;
    border: 1px solid #2b2b2b;
}
.grid-box table {
    width: 243px;
    height: 128px;
    table-layout: fixed;
    border-collapse: collapse;
    clip-path: inset(0 0 8px 0);
}
.grid-box th {
    height: 11px;
    padding: 0;
    background: #3c3c3c;
    border-right: 1px solid #353535;
    font-weight: normal;
    line-height: 8px;
}
.grid-box th:nth-child(1) { width: 10px; }
.grid-box th:nth-child(2) { width: 58px; }
.grid-box th:nth-child(3) { width: 57px; }
.grid-box th:nth-child(4) { width: 56px; }
.grid-box td {
    padding: 0 2px;
    border-right: 1px solid #393939;
    border-bottom: 1px solid #393939;
    line-height: 8px;
    text-align: right;
}
.grid-box td:nth-child(1) { padding: 0; background: #383838; text-align: center; color: #fff; }
.grid-box td:nth-child(2) { text-align: left; }
.current td { background: #555; color: #ddd; }
.scroll {
    display: flex;
    flex-direction: column;
    align-items: center;
    width: 9px;
    padding-top: 12px;
    background: #2f2f2f;
}
.scroll i { font-style: normal; line-height: 7px; color: #ccc; }
.scroll b { width: 6px; height: 14px; border-radius: 1px; background: #aaa; }
.scroll .short { height: 9px; }
.scroll .down { margin-top: auto; }
.mark { position: absolute; border: 2px solid #dc2028; }
.mark-programs { inset: 1px -1px -7px -1px; border-radius: 26px; }
.nest { width: 120px; height: 41px; margin: 26px 0 0 10px; }
.part { width: 63px; height: 82px; margin: 5px 0 0 19px; }

/* status bar */
.status {
    display: flex;
    justify-content: flex-end;
    align-items: center;
    height: 14px;
    padding-right: 7px;
    border-top: 1px solid #171717;
    overflow: hidden;
}
.status span { display: flex; gap: 3px; padding: 0 6px; border-left: 1px dotted #484848; line-height: 8px; }
.status span:last-child { padding-right: 0; }
.orb { width: 14px; height: 14px; margin: 22px auto 0 7px; }

/* preview window */
.preview {
    position: absolute;
    top: 61px;
    right: 18px;
    bottom: 14px;
    left: 477px;
    display: flex;
    flex-direction: column;
    padding: 0 2px 0 3px;
    background: #2b2b2b;
    border: 1px solid #151515;
    border-width: 1px 1px 2px;
    border-radius: 3px 3px 0 0;
    box-shadow: inset 2px 0 #191919, inset -2px 0 #191919;
}
.preview-title {
    display: grid;
    grid-template-columns: 1fr auto 1fr;
    align-items: center;
    height: 15px;
    margin: 0 -2px 0 -3px;
    padding: 0 3px;
    background: linear-gradient(#343434, #121212);
}
.preview-title h2 { font-size: 7px; font-weight: normal; }
.preview-title .winbtns svg { stroke: #ccc; width: 7px; height: 7px; }
.tools {
    display: grid;
    grid-template-columns: 45fr 98fr 192fr 79fr 30fr 28fr 6fr;
    height: 49px;
    background: linear-gradient(#8a8a8a, #9f9f9f);
    border-bottom: 1px solid #777;
    color: #222;
}
.tool-group {
    display: flex;
    flex-direction: column;
    min-width: 0;
    padding: 3px 4px 0;
    border-right: 1px solid #707070;
}
.tool-group:last-child { padding: 0; border: none; }
.tool-group footer {
    display: flex;
    justify-content: center;
    position: relative;
    line-height: 9px;
}
.tool-group footer svg { position: absolute; right: -2px; top: 2px; width: 6px; height: 6px; }
.tool-row { display: flex; justify-content: space-between; flex: 1; }
.tool-list button { gap: 2px; height: 12px; }
.tool-list svg { width: 7px; height: 7px; }
.big { flex-direction: column; align-self: flex-start; gap: 1px; padding-top: 2px; }
.big svg { width: 14px; height: 14px; }
.big.close { padding-top: 0; }
.big.close svg { width: 16px; height: 16px; }
.tool-group button:disabled { color: #646464; }
.split { padding-left: 8px; border-left: 1px solid #7c7c7c; }
.tool-pair { display: flex; flex-direction: column; gap: 3px; flex: 1; padding-top: 3px; }
.tool-pair button { justify-content: center; min-height: 12px; gap: 4px; }
.tool-row .tool-pair { flex: none; }
.tool-pair .round { width: 13px; height: 13px; }
.tool-group:nth-child(6) { padding: 3px 5px 0; }

.canvas {
    display: flex;
    flex: 1;
    min-height: 0;
    padding: 2px 0 0 27px;
}
.canvas .scroll { padding-top: 0; background: none; }
.canvas .scroll b { height: 9px; }
.paper {
    flex: 1;
    margin-right: 26px;
    border: solid #e8e8e8;
    border-width: 5px 5px 0;
    background: #fff;
    overflow: hidden;
}
.report {
    margin: 0 18px 0 38px;
    padding-top: 20px;
    border: dotted #bbb;
    border-width: 0 1px;
    color: #222;
    font-family: "Liberation Sans", "Noto Sans CJK SC", sans-serif;
    white-space: nowrap;
}
.report h2, .report h3 {
    background: #e0e0e0;
    border-top: 1px solid #555;
    text-align: center;
    color: #222;
}
.report h2 { height: 14px; font-size: 11px; line-height: 13px; }
.report h3 { height: 12px; border-bottom: 1px solid #777; font-size: 8px; line-height: 10px; }
.job-name {
    height: 15px;
    border-bottom: 1px solid #999;
    font-family: "Noto Sans", sans-serif;
    font-size: 9px;
    line-height: 14px;
    text-align: center;
}
.report dt, .machine dd, .summary-left dd { font-size: 7px; font-weight: bold; color: #111; }
.summary {
    display: grid;
    grid-template-columns: 155fr 187fr;
    height: 160px;
    padding: 20px 0 0 6px;
}
.summary-left {
    display: grid;
    grid-template-columns: 52px 1fr;
    grid-auto-rows: auto;
    align-content: start;
    line-height: 15px;
}
.summary-left .gap { padding-top: 14px; }
.machine { display: grid; grid-template-columns: 52px 1fr; height: 72px; align-items: center; }
.machine span { margin-left: 16px; }
.machine .count { padding-left: 28px; font-size: 6px; font-weight: normal; }
.summary-right p { line-height: 8px; }
.totals {
    position: relative;
    display: grid;
    grid-template-columns: 38px 39px 72px 1fr;
    grid-template-rows: 10px 10px 16px 10px;
    padding-top: 8px;
}
.totals dd { line-height: 8px; padding-top: 1px; }
.mark-totals { inset: 3px 3px -4px -12px; border-radius: 18px; }
.sheets { width: 100%; border-collapse: collapse; table-layout: fixed; }
.sheets th, .sheets td { height: 13px; padding: 0; text-align: center; }
.sheets th { font-size: 7px; }
.sheets td { height: 18px; }
.sheets span { margin-left: 7px; }
.sheets th:nth-child(1) { width: 51px; }
.sheets th:nth-child(2) { width: 85px; }
.sheets th:nth-child(3) { width: 49px; }
.sheets th:nth-child(4) { width: 43px; }
.sheets tr > :nth-child(4) { text-align: right; }
.sheets tr > :nth-child(5) { padding-left: 14px; text-align: left; }
.item { display: flex; }
.item > svg { width: 102px; height: 101px; }
.item-info dl {
    display: grid;
    grid-template-columns: 48px 87px 42px 39px 1fr;
    grid-template-rows: 12px 12px 15px 14px 15px 14px 12px;
    align-items: center;
}
.item-info dd:nth-of-type(3n + 1) { font-weight: bold; }
.item-info dl dd:nth-child(5n + 4) { text-align: right; font-weight: normal; }
.item-info dl dd:nth-child(5n) { padding-left: 6px; font-weight: normal; }
.item-info p { display: flex; gap: 10px; line-height: 10px; }
.item-info b { font-size: 7px; }
.item-info span { margin-right: 12px; }

.preview-status {
    display: flex;
    align-items: center;
    gap: 5px;
    height: 22px;
    padding: 6px 12px 0 5px;
}
.preview-status span { margin-right: auto; }
.preview-status input {
    width: 51px;
    height: 8px;
    appearance: none;
}
.preview-status input::-webkit-slider-runnable-track { height: 1px; background: #999; }
.preview-status input::-webkit-slider-thumb {
    appearance: none;
    width: 4px;
    height: 5px;
    margin-top: -2px;
    background: #ddd;
    border-radius: 1px 1px 2px 2px;
}
```
